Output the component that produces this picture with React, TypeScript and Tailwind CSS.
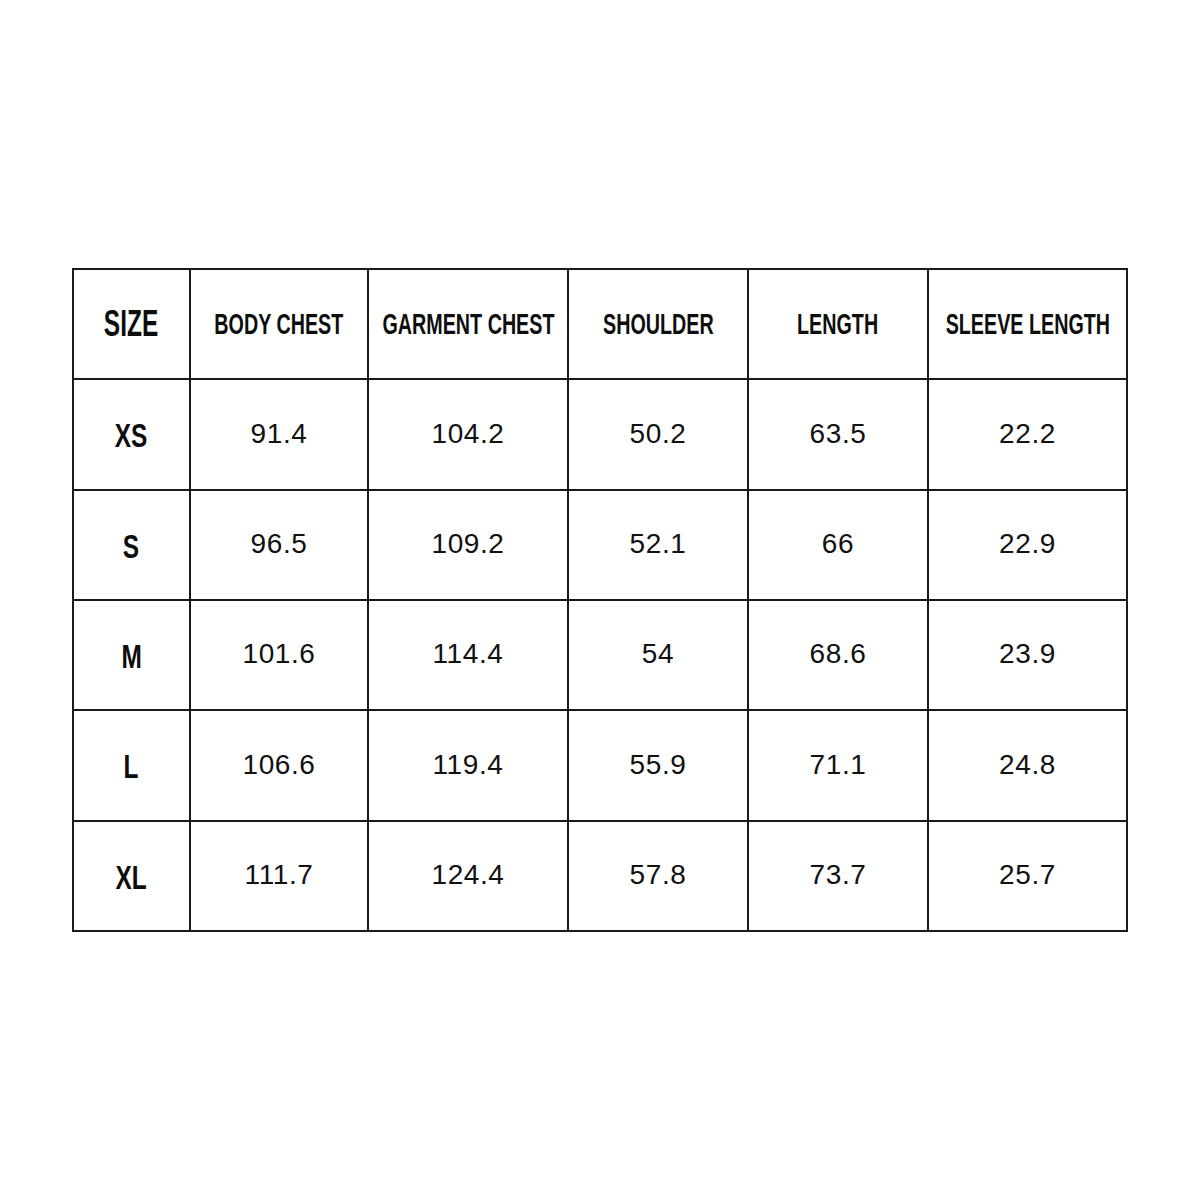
import { Fragment } from "react"

const headers = ["BODY CHEST", "GARMENT CHEST", "SHOULDER", "LENGTH", "SLEEVE LENGTH"]

const rows: [string, string[]][] = [
  ["XS", ["91.4", "104.2", "50.2", "63.5", "22.2"]],
  ["S", ["96.5", "109.2", "52.1", "66", "22.9"]],
  ["M", ["101.6", "114.4", "54", "68.6", "23.9"]],
  ["L", ["106.6", "119.4", "55.9", "71.1", "24.8"]],
  ["XL", ["111.7", "124.4", "57.8", "73.7", "25.7"]],
]

const cell = "flex items-center justify-center border-r-2 border-b-2 border-[#1a1a1a]"
const heading = "inline-block scale-x-[0.68] whitespace-nowrap font-bold text-[#0d0d0d] font-['Liberation_Sans',Arial,sans-serif]"

export default function App() {
  return (
    <div className="min-h-[1200px] w-[1200px] bg-white pt-[268px] pl-[72px]">
      <div className="grid w-[1056px] grid-cols-[117px_178px_200px_180px_180px_199px] grid-rows-[110px_111px_110px_110px_111px_110px] border-t-2 border-l-2 border-[#1a1a1a]">
        {/* header row */}
        <div className={cell}>
          <span className={`${heading} text-[36px] leading-none`}>SIZE</span>
        </div>
        {headers.map((h) => (
          <div key={h} className={cell}>
            <span className={`${heading} text-[29px] leading-none`}>{h}</span>
          </div>
        ))}

        {rows.map(([size, values]) => (
          <Fragment key={size}>
            <div className={cell}>
              <span className={`${heading} scale-x-[0.74] pt-[2px] text-[33px] leading-none`}>{size}</span>
            </div>
            {values.map((v, i) => (
              <div key={i} className={cell}>
                <span className="pb-[2px] font-['Liberation_Sans',Arial,sans-serif] text-[28px] leading-none tracking-[0.6px] text-[#111]">
                  {v}
                </span>
              </div>
            ))}
          </Fragment>
        ))}
      </div>
    </div>
  )
}
